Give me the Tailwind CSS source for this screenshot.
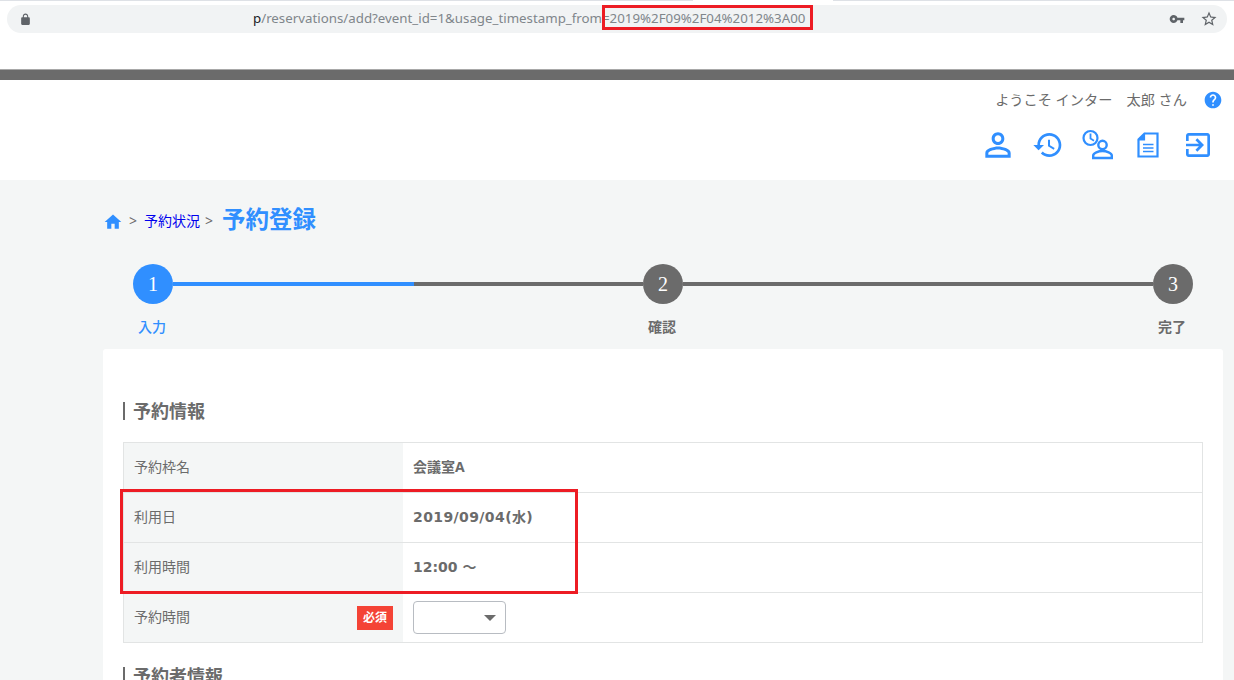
<!DOCTYPE html>
<html lang="ja">
<head>
    <meta charset="UTF-8">
    <meta name="viewport" content="width=device-width, initial-scale=1.0">
    <title>予約登録</title>
    <script src="https://cdn.jsdelivr.net/npm/@tailwindcss/browser@4"></script>
</head>
<body class="relative h-[680px] overflow-hidden bg-[#f4f6f6] font-['Noto_Sans','Noto_Sans_CJK_JP',sans-serif] text-[#6b6b6b]">

    <!-- Browser chrome -->
    <div class="h-[69px] bg-white">
        <div class="flex h-px">
            <div class="w-[693px] bg-[#dee1e6]"></div>
            <div class="w-[140px] bg-white"></div>
            <div class="flex-1 bg-[#dee1e6]"></div>
        </div>
        <div class="ml-[7px] mt-[4px] flex h-[28px] w-[1220px] items-center rounded-full bg-[#f1f3f4] pl-[12px] pr-[9px]">
            <svg class="h-[13px] w-[13px] fill-[#5f6368]" viewBox="0 0 24 24"><path d="M18 8h-1V6c0-2.76-2.24-5-5-5S7 3.24 7 6v2H6c-1.1 0-2 .9-2 2v10c0 1.1.9 2 2 2h12c1.1 0 2-.9 2-2V10c0-1.1-.9-2-2-2zM9 6c0-1.66 1.34-3 3-3s3 1.34 3 3v2H9V6z"/></svg>
            <div class="ml-[221px] whitespace-nowrap text-[13.3px] text-[#80868b]"><span class="text-[#202124]">p</span>/reservations/add?event_id=1&amp;usage_timestamp_from=2019%2F09%2F04%2012%3A00</div>
            <div class="ml-auto flex items-center gap-[15px]">
                <svg class="h-[16px] w-[16px] fill-[#5f6368]" viewBox="0 0 24 24"><path d="M12.65 10C11.83 7.67 9.61 6 7 6c-3.31 0-6 2.69-6 6s2.69 6 6 6c2.61 0 4.83-1.67 5.65-4H17v4h4v-4h2v-4H12.65zM7 14c-1.1 0-2-.9-2-2s.9-2 2-2 2 .9 2 2-.9 2-2 2z"/></svg>
                <svg class="h-[18px] w-[18px] fill-[#5f6368]" viewBox="0 0 24 24"><path d="M22 9.24l-7.19-.62L12 2 9.19 8.63 2 9.24l5.46 4.73L5.82 21 12 17.27 18.18 21l-1.63-7.03L22 9.24zM12 15.4l-3.76 2.27 1-4.28-3.32-2.88 4.38-.38L12 6.1l1.71 4.04 4.38.38-3.32 2.88 1 4.28L12 15.4z"/></svg>
            </div>
        </div>
    </div>

    <!-- Top bar -->
    <div class="h-[11px] border-t border-[#a8a8a8] bg-[#6b6b6b]"></div>

    <!-- Header -->
    <header class="h-[100px] bg-white pr-[11px]">
        <div class="flex h-[40px] items-center justify-end text-[14.2px]">
            <span>ようこそ インター　太郎 さん</span>
            <svg class="ml-[16px] h-[20px] w-[20px] fill-[#308fff]" viewBox="0 0 24 24"><path d="M12 2C6.48 2 2 6.48 2 12s4.48 10 10 10 10-4.48 10-10S17.52 2 12 2zm1 17h-2v-2h2v2zm2.07-7.75l-.9.92C13.45 12.9 13 13.5 13 15h-2v-.5c0-1.1.45-2.1 1.17-2.83l1.24-1.26c.37-.36.59-.86.59-1.41 0-1.1-.9-2-2-2s-2 .9-2 2H8c0-2.21 1.79-4 4-4s4 1.79 4 4c0 .88-.36 1.68-.93 2.25z"/></svg>
        </div>
        <nav class="flex justify-end">
            <div class="flex h-[50px] w-[50px] items-center justify-center">
                <svg class="h-[38px] w-[38px] fill-[#308fff]" viewBox="0 0 24 24"><path d="M12 5.9c1.16 0 2.1.94 2.1 2.1s-.94 2.1-2.1 2.1S9.9 9.16 9.9 8s.94-2.1 2.1-2.1m0 9c2.97 0 6.1 1.46 6.1 2.1v1.1H5.9V17c0-.64 3.13-2.1 6.1-2.1M12 4C9.79 4 8 5.79 8 8s1.79 4 4 4 4-1.79 4-4-1.79-4-4-4zm0 9c-2.67 0-8 1.34-8 4v3h16v-3c0-2.66-5.33-4-8-4z"/></svg>
            </div>
            <div class="flex h-[50px] w-[50px] items-center justify-center">
                <svg class="h-[32px] w-[32px] fill-[#308fff]" viewBox="0 0 24 24"><path d="M13 3c-4.97 0-9 4.03-9 9H1l3.89 3.89.07.14L9 12H6c0-3.87 3.13-7 7-7s7 3.13 7 7-3.13 7-7 7c-1.93 0-3.68-.79-4.94-2.06l-1.42 1.42C8.27 19.99 10.51 21 13 21c4.97 0 9-4.03 9-9s-4.03-9-9-9zm-1 5v5l4.28 2.54.72-1.21-3.5-2.08V8H12z"/></svg>
            </div>
            <div class="flex h-[50px] w-[50px] items-center justify-center">
                <svg class="h-[32px] w-[32px]" viewBox="0 0 32 32" fill="none" stroke="#308fff">
                    <circle cx="8.5" cy="9" r="7" stroke-width="2.2"/>
                    <path d="M8.500 4.500v5l3.500 2.200" stroke-width="1.8"/>
                    <circle cx="20.500" cy="16" r="4.200" stroke-width="2.400"/>
                    <path d="M11.200 29v-2.500c0-2.500 5.300-4.500 9.300-4.500s9.300 2 9.300 4.500v2.500z" stroke-width="2.400"/>
                </svg>
            </div>
            <div class="flex h-[50px] w-[50px] items-center justify-center">
                <svg class="h-[26px] w-[22px]" viewBox="0 0 22 26" fill="none" stroke="#308fff">
                    <path d="M7.500 1.500H20.500V24.500H1.500V7.500z" stroke-width="2.200"/>
                    <path d="M7.500 2v6H2z" fill="#308fff" stroke-width="1.200"/>
                    <path d="M6 12.500h10.500M6 16h10.500M6 19.500h10.500" stroke-width="1.600"/>
                </svg>
            </div>
            <div class="flex h-[50px] w-[50px] items-center justify-center">
                <svg class="h-[32px] w-[32px] fill-[#308fff]" viewBox="0 0 24 24"><path d="M10.09 15.59L11.5 17l5-5-5-5-1.41 1.41L12.67 11H3v2h9.67l-2.58 2.59zM19 3H5c-1.11 0-2 .9-2 2v4h2V5h14v14H5v-4H3v4c0 1.1.89 2 2 2h14c1.1 0 2-.9 2-2V5c0-1.1-.9-2-2-2z"/></svg>
            </div>
        </nav>
    </header>

    <!-- Main -->
    <main class="pl-[103px] pr-[11px]">
        <div class="flex h-[84px] items-center pb-[5px]">
            <svg class="mt-[5px] h-[20px] w-[20px] fill-[#308fff]" viewBox="0 0 24 24"><path d="M10 20v-6h4v6h5v-8h3L12 3 2 12h3v8z"/></svg>
            <span class="ml-[6px] mt-[1px] text-[14px]">&gt;</span>
            <a class="ml-[7px] mt-[1px] text-[14px] text-[#0000ee]">予約状況</a>
            <span class="ml-[5px] mt-[1px] text-[14px]">&gt;</span>
            <h1 class="ml-[9px] text-[23.500px] font-bold text-[#308fff]">予約登録</h1>
        </div>

        <!-- Steps -->
        <div class="relative mx-[30px] h-[85px]">
            <div class="flex h-[40px] items-center">
                <div class="flex h-[40px] w-[40px] shrink-0 items-center justify-center rounded-full bg-[#308fff] font-['Liberation_Serif',serif] text-[20px] text-white">1</div>
                <div class="h-[4px] w-[241px] bg-[#308fff]"></div>
                <div class="h-[4px] w-[229px] bg-[#6b6b6b]"></div>
                <div class="flex h-[40px] w-[40px] shrink-0 items-center justify-center rounded-full bg-[#6b6b6b] font-['Liberation_Serif',serif] text-[20px] text-white">2</div>
                <div class="h-[4px] w-[470px] bg-[#6b6b6b]"></div>
                <div class="flex h-[40px] w-[40px] shrink-0 items-center justify-center rounded-full bg-[#6b6b6b] font-['Liberation_Serif',serif] text-[20px] text-white">3</div>
            </div>
            <div class="-ml-[1px] mt-[13px] flex text-[14px] leading-[20px]">
                <div class="w-[40px] text-center font-medium text-[#308fff]">入力</div>
                <div class="ml-[470px] w-[40px] text-center font-bold">確認</div>
                <div class="ml-[470px] w-[40px] text-center font-bold">完了</div>
            </div>
        </div>

        <!-- Card -->
        <section class="h-[331px] overflow-hidden rounded-t-[3px] bg-white px-[20px] pt-[53px]">
            <h2 class="flex h-[18px] items-center border-l-2 border-[#6b6b6b] pl-[8px] text-[18px] font-bold">予約情報</h2>

            <div class="mt-[22px] border border-[#e2e4e4] text-[14px]">
                <div class="flex h-[50px] border-b border-[#e2e4e4]">
                    <div class="flex w-[279px] items-center bg-[#f4f6f6] pb-[2px] pl-[10px]">予約枠名</div>
                    <div class="flex items-center pb-[2px] pl-[10px] font-bold">会議室A</div>
                </div>
                <div class="flex h-[50px] border-b border-[#e2e4e4]">
                    <div class="flex w-[279px] items-center bg-[#f4f6f6] pb-[2px] pl-[10px]">利用日</div>
                    <div class="flex items-center pl-[10px] font-['DejaVu_Sans','Noto_Sans_CJK_JP',sans-serif] font-bold tracking-[0.4px]">2019/09/04(水)</div>
                </div>
                <div class="flex h-[50px] border-b border-[#e2e4e4]">
                    <div class="flex w-[279px] items-center bg-[#f4f6f6] pb-[2px] pl-[10px]">利用時間</div>
                    <div class="flex items-center pl-[10px] font-['DejaVu_Sans','Noto_Sans_CJK_JP',sans-serif] font-bold">12:00 ～</div>
                </div>
                <div class="flex h-[49px]">
                    <div class="flex w-[279px] items-center justify-between bg-[#f4f6f6] pl-[10px] pr-[10px]">
                        <span class="pb-[2px]">予約時間</span>
                        <span class="flex h-[24px] w-[36px] items-center justify-center bg-[#f44336] text-[12px] font-bold text-white">必須</span>
                    </div>
                    <div class="flex items-center pl-[10px]">
                        <div class="flex h-[33px] w-[93px] items-center justify-end rounded-[4px] border border-[#b8bcc2] bg-white pr-[9px]">
                            <div class="h-0 w-0 border-x-[6px] border-t-[6px] border-x-transparent border-t-[#6b6b6b]"></div>
                        </div>
                    </div>
                </div>
            </div>

            <h2 class="mt-[24px] flex h-[18px] items-center border-l-2 border-[#6b6b6b] pl-[8px] text-[18px] font-bold">予約者情報</h2>
        </section>
    </main>

    <!-- Red annotation boxes drawn over the screenshot -->
    <div class="absolute left-[602px] top-[5px] h-[25px] w-[211px] border-[3px] border-[#ed1c24]"></div>
    <div class="absolute left-[120px] top-[489px] h-[105px] w-[458px] border-[3px] border-[#ed1c24]"></div>

</body>
</html>
